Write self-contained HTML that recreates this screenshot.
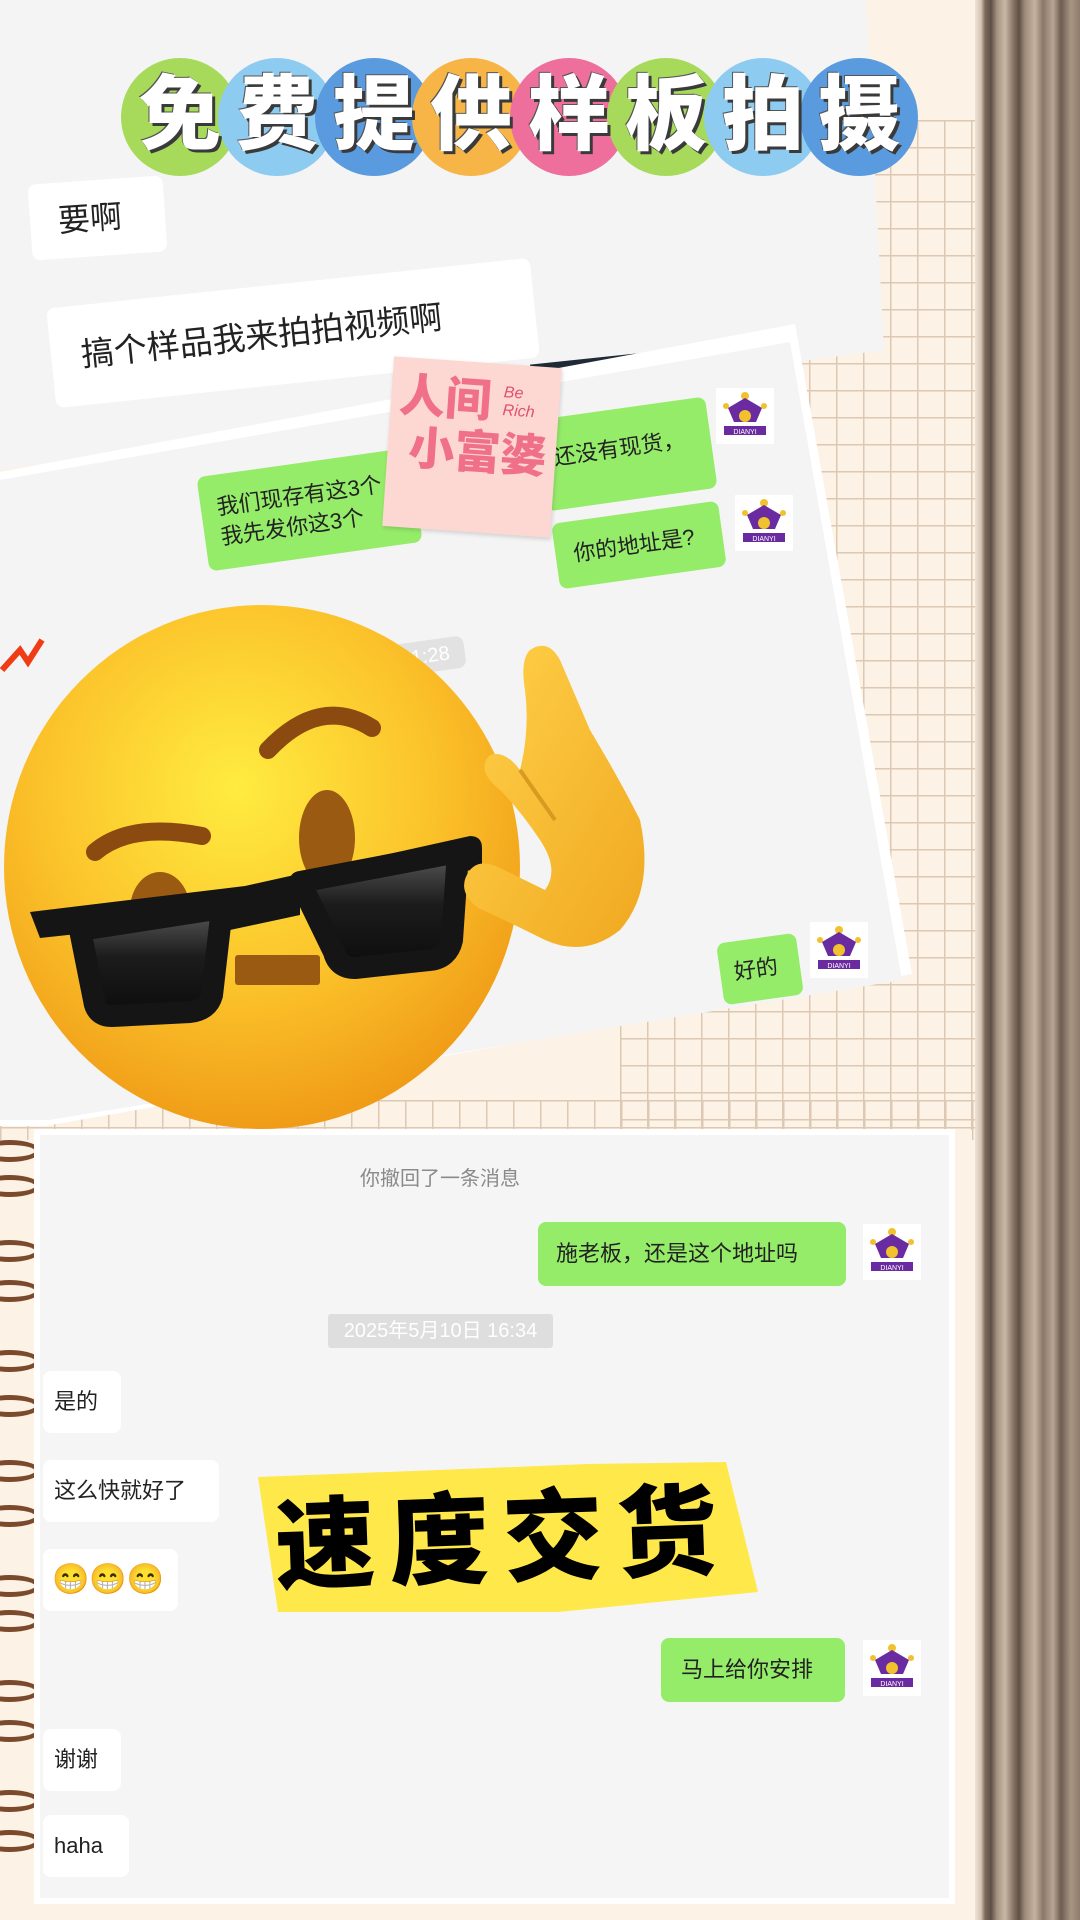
<!DOCTYPE html>
<html><head><meta charset="utf-8"><style>
*{margin:0;padding:0;box-sizing:border-box}
body{width:1080px;height:1920px;overflow:hidden;position:relative;background:#fdf2e6;font-family:"Liberation Sans","Noto Sans CJK SC",sans-serif}
.abs{position:absolute}
.grid{background-image:linear-gradient(#dcc8b3 1.5px,transparent 1.5px),linear-gradient(90deg,#dcc8b3 1.5px,transparent 1.5px);background-size:27px 27px}
.wood{left:975px;top:0;width:105px;height:1920px;background:linear-gradient(90deg,#efe3d6 0,#d4c4b4 6px,#7d6b5e 10px,#5e4f45 16px,#a59382 22px,#c9b8a7 30px,#8a7768 38px,#5e4f45 44px,#9f8c7b 50px,#c5b3a1 60px,#8a7768 68px,#b8a694 78px,#6e5d50 86px,#a89684 96px,#8f7c6c 105px)}
.card1{left:0;top:0;width:900px;height:470px;background:#f4f4f4;clip-path:polygon(0 0,866px 0,884px 350px,55px 462px,0 470px)}
.card2{left:0;top:330px;width:910px;height:800px;background:#f4f4f4;clip-path:polygon(0 150px,790px 12px,902px 650px,49px 790px,0 790px)}
.card2b{left:0;top:322px;width:920px;height:816px;background:#fff;clip-path:polygon(0 150px,795px 2px,912px 652px,45px 804px,0 804px)}
.card3{left:34px;top:1129px;width:921px;height:775px;background:#f5f5f5;border:6px solid #fff}
.b{position:absolute;border-radius:8px;color:#222;white-space:nowrap}
.w{background:#fff}
.g{background:#95ec69}
.circ{position:absolute;width:118px;height:118px;border-radius:50%;top:58px}
.ch{position:absolute;top:66px;width:118px;text-align:center;font-size:82px;font-weight:900;color:#fff;text-shadow:3px 3px 0 #3a3a3a,-1px -1px 0 #555;line-height:100px}
.ring{position:absolute;left:-20px;width:60px;height:22px;border:5px solid #7b4a2c;border-radius:50%;border-left-color:transparent}
</style></head><body>
<div class="abs grid" style="left:620px;top:120px;width:356px;height:1010px"></div>
<div class="abs grid" style="left:0;top:1100px;width:976px;height:40px"></div>
<div class="abs wood"></div>
<div class="ring" style="top:215px"></div><div class="ring" style="top:260px"></div><div class="ring" style="top:340px"></div><div class="ring" style="top:380px"></div>
<div class="ring" style="top:1140px"></div><div class="ring" style="top:1175px"></div><div class="ring" style="top:1240px"></div><div class="ring" style="top:1280px"></div><div class="ring" style="top:1350px"></div><div class="ring" style="top:1395px"></div><div class="ring" style="top:1460px"></div><div class="ring" style="top:1505px"></div><div class="ring" style="top:1575px"></div><div class="ring" style="top:1610px"></div><div class="ring" style="top:1680px"></div><div class="ring" style="top:1720px"></div><div class="ring" style="top:1790px"></div><div class="ring" style="top:1830px"></div>

<div class="abs card1"></div>
<div class="b w" style="left:30px;top:180px;width:135px;height:76px;font-size:32px;line-height:76px;padding-left:28px;transform:rotate(-4deg)">要啊</div>
<div class="b w" style="left:50px;top:283px;width:486px;height:100px;font-size:33px;line-height:100px;padding-left:30px;transform:rotate(-6deg)">搞个样品我来拍拍视频啊</div>
<div class="abs" style="left:530px;top:356px;width:165px;height:8px;background:#1f2a36;transform:rotate(-6deg)"></div>

<div class="abs card2b"></div>
<div class="abs card2"></div>
<div class="b g" style="left:540px;top:408px;width:172px;height:92px;font-size:22px;padding:22px 0 0 14px;transform:rotate(-8deg)">还没有现货，</div>
<div class="b g" style="left:202px;top:462px;width:215px;height:95px;font-size:22px;line-height:30px;padding:18px 0 0 16px;transform:rotate(-8deg)">我们现存有这3个<br>我先发你这3个</div>
<div class="b g" style="left:555px;top:512px;width:168px;height:66px;font-size:22px;line-height:66px;padding-left:18px;transform:rotate(-8deg)">你的地址是?</div>
<div class="b g" style="left:720px;top:938px;width:80px;height:62px;font-size:22px;line-height:62px;padding-left:14px;transform:rotate(-8deg)">好的</div>
<div class="b" style="left:395px;top:640px;width:70px;height:32px;background:#e2e2e2;color:#fff;font-size:20px;line-height:32px;padding-left:16px;transform:rotate(-8deg)">1:28</div>

<svg width="0" height="0" style="position:absolute"><defs><g id="av"><rect width="58" height="56" fill="#fff"/><circle cx="29" cy="8" r="4" fill="#f2c12e"/><circle cx="10" cy="18" r="3" fill="#f2c12e"/><circle cx="48" cy="18" r="3" fill="#f2c12e"/><path d="M12 20 L29 10 L46 20 L40 34 L18 34Z" fill="#6a2ba0"/><circle cx="29" cy="28" r="6" fill="#f2c12e"/><rect x="8" y="38" width="42" height="9" fill="#6a2ba0"/><text x="29" y="46" font-size="7" fill="#fff" text-anchor="middle" font-family="Liberation Sans">DIANYI</text></g></defs></svg>
<svg class="abs" style="left:716px;top:388px" width="58" height="56"><use href="#av"/></svg>
<svg class="abs" style="left:735px;top:495px" width="58" height="56"><use href="#av"/></svg>
<svg class="abs" style="left:810px;top:922px" width="58" height="56"><use href="#av"/></svg>

<div class="abs" style="left:388px;top:362px;width:168px;height:170px;background:#fdd8d2;transform:rotate(4deg);box-shadow:1px 2px 4px rgba(0,0,0,.15)">
<div style="position:absolute;left:8px;top:12px;font-size:46px;font-weight:900;color:#f0708a;line-height:52px">人间<br>&nbsp;小富婆</div>
<div style="position:absolute;left:112px;top:20px;font-size:16px;color:#e05070;line-height:18px;font-style:italic">Be<br>Rich</div></div>

<div class="circ" style="left:121px;background:#a7da5b"></div>
<div class="circ" style="left:218px;background:#8ecbf1"></div>
<div class="circ" style="left:315px;background:#5a9be0"></div>
<div class="circ" style="left:412px;background:#f7b548"></div>
<div class="circ" style="left:510px;background:#ee6f9c"></div>
<div class="circ" style="left:607px;background:#a7da5b"></div>
<div class="circ" style="left:704px;background:#8ecbf1"></div>
<div class="circ" style="left:800px;background:#5a9be0"></div>
<div class="ch" style="left:121px">免</div><div class="ch" style="left:218px">费</div><div class="ch" style="left:315px">提</div><div class="ch" style="left:412px">供</div><div class="ch" style="left:510px">样</div><div class="ch" style="left:607px">板</div><div class="ch" style="left:704px">拍</div><div class="ch" style="left:800px">摄</div>

<svg class="abs" style="left:0;top:590px" width="680" height="540" viewBox="0 0 680 540">
<defs><radialGradient id="fg" cx="0.45" cy="0.35" r="0.7"><stop offset="0" stop-color="#ffec40"/><stop offset="0.55" stop-color="#fbc22a"/><stop offset="1" stop-color="#ee9514"/></radialGradient>
<linearGradient id="lg" x1="0" y1="0" x2="0" y2="1"><stop offset="0" stop-color="#5a5a5a"/><stop offset="0.45" stop-color="#1c1c1c"/><stop offset="1" stop-color="#0c0c0c"/></linearGradient>
<linearGradient id="hg" x1="0" y1="0" x2="1" y2="1"><stop offset="0" stop-color="#ffd24a"/><stop offset="1" stop-color="#f0a820"/></linearGradient></defs>
<path d="M2 80 L20 60 L28 72 L42 50" stroke="#f03c14" stroke-width="6" fill="none"/>
<ellipse cx="262" cy="277" rx="258" ry="262" fill="url(#fg)"/>
<path d="M268 160 Q320 105 372 138" stroke="#8a4a10" stroke-width="18" fill="none" stroke-linecap="round"/>
<path d="M95 262 Q130 232 202 246" stroke="#8a4a10" stroke-width="18" fill="none" stroke-linecap="round"/>
<ellipse cx="160" cy="320" rx="30" ry="38" fill="#9a5a12"/>
<ellipse cx="327" cy="248" rx="28" ry="48" fill="#9a5a12"/>
<rect x="235" y="365" width="85" height="30" rx="3" fill="#9a5a12"/>
<path d="M30 322 L245 296 L470 246 Q482 246 482 258 L482 278 L300 312 L245 326 L40 348 Z" fill="#151515"/>
<path d="M80 340 L222 318 L212 405 Q208 420 190 422 L112 426 Q96 426 94 410 Z" fill="url(#lg)" stroke="#151515" stroke-width="22" stroke-linejoin="round"/>
<path d="M300 292 L458 262 L452 350 Q448 368 430 370 L355 378 Q338 378 334 362 Z" fill="url(#lg)" stroke="#151515" stroke-width="22" stroke-linejoin="round"/>
<path d="M222 318 L300 296 L300 325 L230 340Z" fill="#151515"/>
<path d="M530 60 Q548 48 560 70 L590 140 Q620 190 640 230 Q655 300 620 340 Q585 368 545 350 Q505 330 478 318 Q455 300 470 280 Q480 268 500 278 L545 300 Q560 280 540 250 Q520 220 500 200 Q475 180 490 165 Q505 160 520 180 Q530 140 525 100 Q520 70 530 60Z" fill="url(#hg)"/>
<path d="M520 180 L555 230" stroke="#d99a20" stroke-width="4" fill="none"/>
</svg>

<div class="abs card3"></div>
<div class="abs" style="left:330px;top:1162px;width:220px;text-align:center;font-size:20px;color:#8a8a8a">你撤回了一条消息</div>
<div class="b g" style="left:538px;top:1222px;width:308px;height:64px;font-size:22px;line-height:64px;padding-left:18px">施老板，还是这个地址吗</div>
<svg class="abs" style="left:863px;top:1224px" width="58" height="56"><use href="#av"/></svg>
<div class="abs" style="left:328px;top:1314px;width:225px;height:34px;background:#dedede;color:#fff;font-size:20px;line-height:34px;text-align:center;border-radius:3px">2025年5月10日 16:34</div>
<div class="b w" style="left:43px;top:1371px;width:78px;height:62px;font-size:22px;line-height:62px;padding-left:11px">是的</div>
<div class="b w" style="left:43px;top:1460px;width:176px;height:62px;font-size:22px;line-height:62px;padding-left:11px">这么快就好了</div>
<div class="b w" style="left:43px;top:1549px;width:135px;height:62px;font-size:30px;line-height:62px;padding-left:9px">😁😁😁</div>
<div class="abs" style="left:258px;top:1462px;width:502px;height:152px;background:#ffe84a;clip-path:polygon(0 15px,180px 8px,330px 2px,468px 0,500px 130px,300px 150px,20px 150px)"></div>
<div class="abs" style="left:275px;top:1480px;font-size:100px;font-weight:900;color:#000;letter-spacing:14px;line-height:120px;transform:rotate(-2deg)">速度交货</div>
<div class="b g" style="left:661px;top:1638px;width:184px;height:64px;font-size:22px;line-height:64px;padding-left:20px">马上给你安排</div>
<svg class="abs" style="left:863px;top:1640px" width="58" height="56"><use href="#av"/></svg>
<div class="b w" style="left:43px;top:1729px;width:78px;height:62px;font-size:22px;line-height:62px;padding-left:11px">谢谢</div>
<div class="b w" style="left:43px;top:1815px;width:86px;height:62px;font-size:22px;line-height:62px;padding-left:11px">haha</div>
</body></html>
